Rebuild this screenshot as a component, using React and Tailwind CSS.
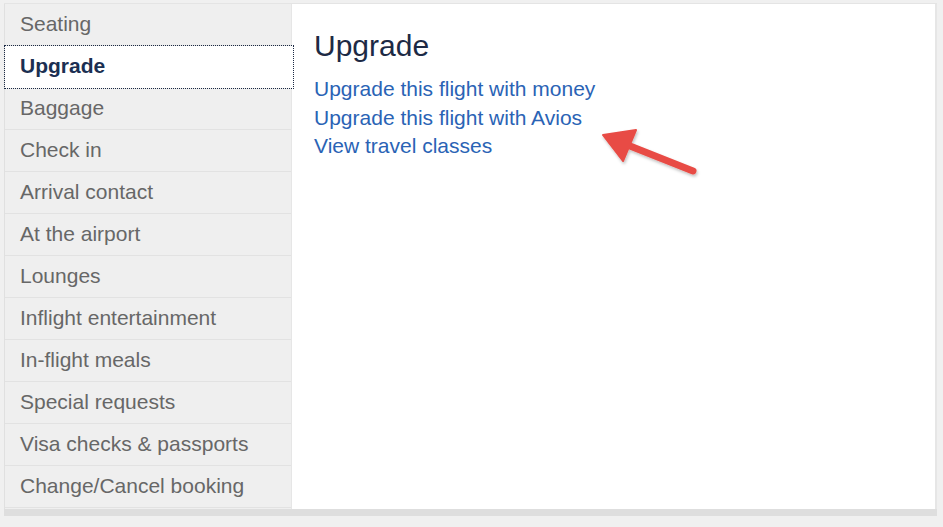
import React from 'react';

const navItems = [
  'Seating',
  'Upgrade',
  'Baggage',
  'Check in',
  'Arrival contact',
  'At the airport',
  'Lounges',
  'Inflight entertainment',
  'In-flight meals',
  'Special requests',
  'Visa checks & passports',
  'Change/Cancel booking',
];

const links = [
  'Upgrade this flight with money',
  'Upgrade this flight with Avios',
  'View travel classes',
];

function Arrow() {
  return (
    <svg className="absolute left-[596px] top-[124px]" width="110" height="60" viewBox="0 0 110 60">
      <defs>
        <filter id="sh" x="-20%" y="-20%" width="140%" height="160%">
          <feDropShadow dx="1" dy="2" stdDeviation="1.5" floodColor="#000" floodOpacity="0.25" />
        </filter>
      </defs>
      <g filter="url(#sh)" fill="#e84c45" stroke="#e84c45" strokeLinejoin="round">
        <line x1="97" y1="47" x2="34" y2="22" strokeWidth="7" strokeLinecap="round" />
        <polygon points="7,11 40,6 27,37" strokeWidth="2" />
      </g>
    </svg>
  );
}

export default function App() {
  return (
    <div className="w-[943px] h-[527px] bg-[#f0f0f0] pl-[4px] pt-[3px] font-['Liberation_Sans',Arial,sans-serif] relative overflow-hidden">
      <div className="w-[933px] border-b-[7px] border-[#dedede]">
        <div className="flex h-[506px] border-t border-[#e4e4e4]">
          {/* Side navigation */}
          <div className="w-[288px] border-l border-[#e0e0e0] bg-[#efefef] border-r border-r-[#e6e6e6]">
            {navItems.map((item) =>
              item === 'Upgrade' ? (
                <div
                  key={item}
                  className="h-[42px] bg-white flex items-center pl-[15px] pb-[2px] text-[21px] font-bold text-[#1b2f52] outline-1 outline-dotted outline-[#1b2a44] -mr-[2px] relative z-10"
                >
                  {item}
                </div>
              ) : (
                <div
                  key={item}
                  className="h-[42px] border-b border-[#e2e2e2] flex items-center pl-[15px] pb-[1px] text-[21px] text-[#676767]"
                >
                  {item}
                </div>
              )
            )}
          </div>

          {/* Content */}
          <div className="flex-1 bg-white border-r-2 border-[#e6e6e6] pl-[22px] pt-[23px]">
            <h1 className="text-[30px] leading-[38px] text-[#1d2a45] mb-[10px]">Upgrade</h1>
            <div className="flex flex-col">
              {links.map((l) => (
                <a key={l} href="#" className="text-[21px] leading-[28.5px] text-[#2a63b5]">
                  {l}
                </a>
              ))}
            </div>
          </div>
        </div>
      </div>
      <Arrow />
    </div>
  );
}
